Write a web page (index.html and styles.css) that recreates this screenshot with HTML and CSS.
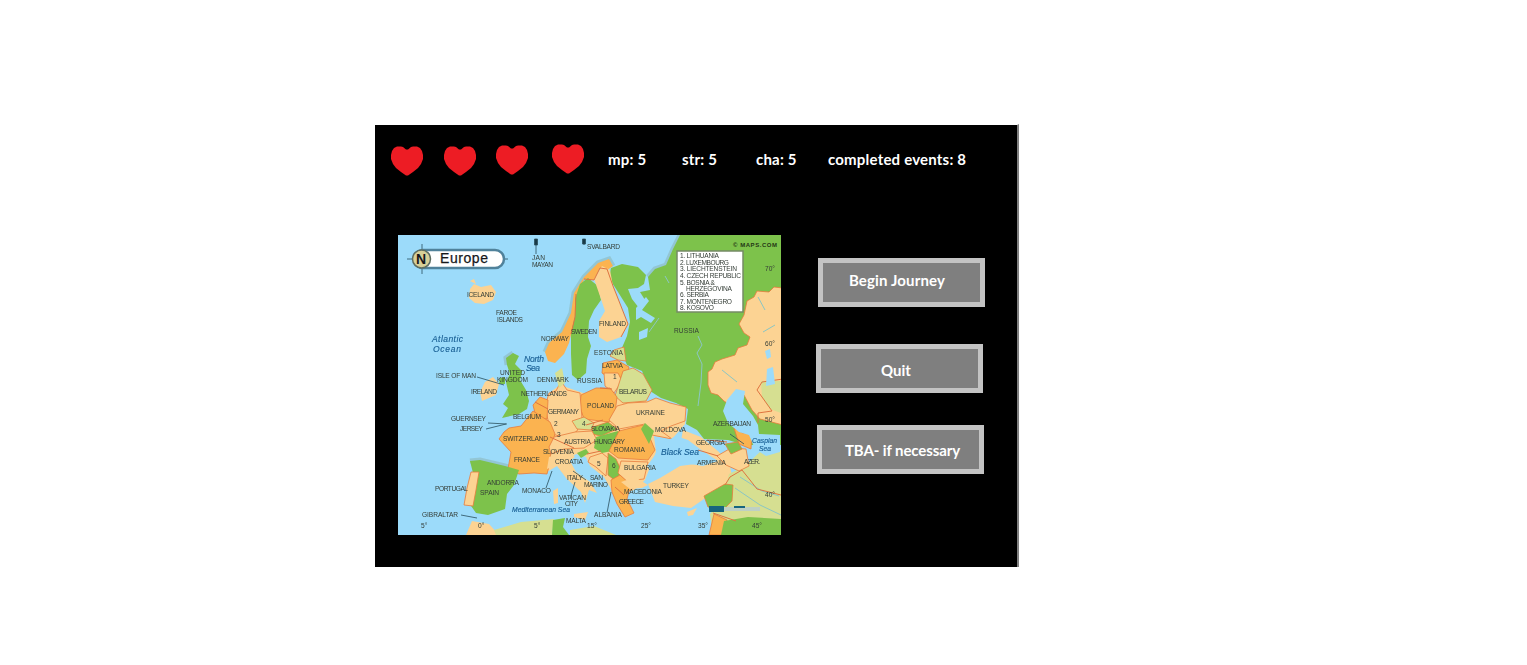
FILE: index.html
```html
<!DOCTYPE html>
<html lang="en">
<head>
<meta charset="utf-8">
<title>Journey</title>
<link rel="stylesheet" href="styles.css">
</head>
<body>
<svg class="defs" width="0" height="0" aria-hidden="true">
  <symbol id="heart" viewBox="0 0 32 30"><path d="M16 3.500H17L20 1L22 .5H26L29 2L31 5L32 9V13L30 18L27 22L22 26L17 29.500H15L10 26L5 22L2 18L0 13V9L1 5L3 2L6 .5H10L12 1L15 3.500Z"/></symbol>
</svg>
<main class="game">
  <header class="status">
    <div class="hearts">
      <svg class="heart"><use href="#heart"/></svg>
      <svg class="heart"><use href="#heart"/></svg>
      <svg class="heart heart-third"><use href="#heart"/></svg>
      <svg class="heart heart-last"><use href="#heart"/></svg>
    </div>
    <span class="stat mp">mp: 5</span>
    <span class="stat str">str: 5</span>
    <span class="stat cha">cha: 5</span>
    <span class="stat events">completed events: 8</span>
  </header>
  <section class="content">
    <svg class="map" viewBox="398 235 383 300" role="img" aria-label="Map of Europe">
      <g class="land">
        <rect class="sea" x="398" y="235" width="383" height="300"/>
        <!-- Shallow coastal water -->
        <path class="shelf" d="M545 352L549 343L562 332L571 313L574 293L584 277L598 263L609 259L613 266M680 235L673 249L666 265L655 269L648 277M507 365L506 358L513 353M470 461L480 460L505 466L519 470"/>
        <!-- Continental mainland -->
        <path class="beige" d="M549 393L560 385L583 393L640 400L686 407L685 424L672 439L654 436L656 452L645 480L634 490L624 494L632 512L624 515L611 489L604 477L590 466L586 457L576 454L569 459L576 472L590 482L584 490L567 479L557 466L547 472L535 470L540 420Z"/>
        <!-- Russia and Kola -->
        <path class="green" d="M680 235H781V445H745L728 440L704 439L697 430L686 424L688 409L676 403L661 398L650 391L642 371L627 365L621 350L627 336L630 322L628 308L618 292L609 278L611 268L622 264L638 267L646 275L644 284L638 288L628 289L632 299L639 308L645 300L640 292L650 290L648 277L655 269L666 265L673 249Z"/>
        <path class="sea" d="M636 308L646 297L649 301L642 310L655 318L651 323L641 317L636 320ZM639 332L648 328L647 337L639 340Z"/>
        <path class="river" d="M698 336L702 345L697 353L702 364L701 383L698 406M659 318L649 332M665 276L669 283"/>
        <!-- Kazakhstan -->
        <path class="beige edge" d="M783 288L774 287L769 292L757 291L754 297L747 301L744 315L739 324L744 333L750 337L747 345L738 348L735 355L722 359L715 362L712 369L708 372L708 385L711 393L718 395L724 401L730 405L738 396L744 395L752 410L760 419L783 425Z"/>
        <path class="pale" d="M761 381L781 381V413L770 409L762 397Z"/>
        <path class="border" d="M783 379L762 382L757 390L772 411L758 413V423"/>
        <path class="river" d="M758 297L765 310M722 370L737 382M775 325L763 332"/>
        <path class="sea" d="M767 369L773 367L775 384L766 386ZM765 351L770 349L771 357L767 359Z"/>
        <!-- Nordic countries -->
        <path class="orange" d="M545 352L549 343L562 332L571 313L574 293L584 277L598 263L609 259L613 266L606 271L600 268L594 280L584 279L578 294L574 322L569 343L564 354L555 363L548 361Z"/>
        <path class="green" d="M580 284L588 278L598 286L601 300L594 310L589 321L588 337L591 346L587 359L586 373L578 380L572 375L571 354L571 333L575 316L575 299Z"/>
        <path class="beige" d="M594 279L602 266L610 270L613 286L617 296L622 310L628 324L621 337L607 342L599 337L599 321L605 311L601 299Z"/>
        <path class="border" d="M584 279L594 280L600 268L607 269L613 286L617 296L628 324L621 337M576 294L575 317L571 334"/>
        <path class="beige" d="M470 289L474 284L481 287L491 285L496 292L493 300L484 304L475 303L469 298ZM470 281L474 279L476 284Z"/>
        <!-- British Isles -->
        <path class="green" d="M507 365L506 358L513 353L519 356L515 364L522 371L520 380L526 390L529 401L527 409L519 414L502 418L508 408L503 404L509 395L506 382L510 374ZM500 378L505 377V384L499 384Z"/>
        <path class="beige" d="M485 382L493 377L499 384L496 395L482 401L480 392Z"/>
        <!-- Baltics and eastern Europe -->
        <path class="pale edge" d="M614 350L624 347L626 361L618 360L610 356Z"/>
        <path class="orange edge" d="M603 363L617 360L629 367L627 377L609 378L602 373Z"/>
        <path class="beige edge" d="M604 373L618 373L622 381L614 393L605 386Z"/>
        <path class="pale edge" d="M623 371L633 368L643 374L652 390L646 401L623 403L615 396Z"/>
        <path class="orange edge" d="M581 395L596 388L610 388L617 397L615 413L609 422L584 419L580 407Z"/>
        <path class="beige edge" d="M617 406L628 403L647 402L656 398L670 403L686 407L685 421L671 426L661 431L672 439L652 435L645 424L619 429L609 420Z"/>
        <!-- Central and western Europe -->
        <path class="beige edge" d="M549 393L556 391L561 381L567 390L580 393L582 419L577 431L567 438L552 434L548 420L545 407Z"/>
        <path class="pale" d="M555 373L562 368L565 383L559 388Z"/>
        <path class="orange edge" d="M533 405L540 397L548 400L547 419L536 417Z"/>
        <path class="orange edge" d="M509 428L521 426L533 411L550 422L555 434L551 446L550 462L547 474L534 473L519 474L508 469L511 452L499 439L504 432Z"/>
        <path class="pale edge" d="M572 421L584 417L594 423L591 430L577 429Z"/>
        <path class="green edge" d="M593 427L608 422L617 429L601 436L592 434Z"/>
        <path class="beige edge" d="M554 437L575 432L592 431L597 440L584 448L564 449L551 454L549 447Z"/>
        <path class="green" d="M596 437L618 431L625 438L617 450L602 453L594 448Z"/>
        <path class="orange edge" d="M619 431L643 425L650 438L655 450L648 460L618 458L609 451Z"/>
        <path class="green" d="M645 423L654 431L649 444L641 429Z"/>
        <path class="beige" d="M549 457L567 451L575 457L568 462L576 477L590 482L597 493L589 490L585 503L581 492L567 479L557 465L547 469ZM574 514L588 512L585 520L574 517ZM553 491L558 488V503L554 504Z"/>
        <path class="green" d="M577 453L586 449L589 453L581 458Z"/>
        <path class="beige edge" d="M590 457L602 453L608 458L606 476L596 467L588 462Z"/>
        <path class="green edge" d="M608 453L616 459L621 470L617 482L608 475Z"/>
        <path class="beige edge" d="M621 461L648 462L644 479L626 481L618 473Z"/>
        <path class="orange edge" d="M611 480L620 475L629 483L639 484L629 491L627 499L634 513L625 517L617 504L612 492Z"/>
        <path class="beige" d="M621 482L635 477L648 485L642 488L630 489Z"/>
        <!-- Iberia -->
        <path class="green" d="M470 461L480 460L505 466L519 470L514 485L507 494L505 509L488 515L476 513L469 503L474 477Z"/>
        <path class="beige edge" d="M471 472L479 472L476 490L473 506L464 505L467 488Z"/>
        <!-- Turkey, Caucasus and Middle East -->
        <path class="beige" d="M648 484L660 478L680 466L703 463L730 466L734 486L724 494L704 499L691 508L673 506L655 502Z"/>
        <path class="pale" d="M729 474L745 466L760 452L781 450V535H713L710 514L723 498Z"/>
        <path class="beige" d="M683 430L701 437L719 452L730 466L724 474L700 460L680 446Z"/>
        <path class="green edge" d="M704 496L725 484L733 485L732 501L724 509L708 507Z"/>
        <path class="beige edge" d="M717 456L731 448L746 449L749 466L739 471L726 465Z"/>
        <path class="orange edge" d="M734 428L743 433L752 431L751 449L739 444Z"/>
        <path class="green edge" d="M725 444L738 442L742 449L731 454Z"/>
        <path class="orange edge" d="M714 514L727 520L724 535H709Z"/>
        <path class="green" d="M724 521L748 517L781 519V535H721Z"/>
        <path class="river" d="M735 488L760 505L781 515M740 477L762 491L779 496"/>
        <path class="border" d="M730 477L742 470L750 480L757 489L781 495M725 485L730 477M713 513L736 521"/>
        <!-- Black Sea and Caspian -->
        <path class="sea" d="M659 445L676 436L688 440L700 449L718 461L703 466L684 463L669 472L654 475L647 466L655 455Z"/>
        <path class="sea" d="M736 389L745 391L743 404L753 416L758 425L759 434L780 435V452L766 456L755 449L749 435L739 432L728 423L723 411L727 400Z"/>
        <!-- Africa -->
        <path class="beige" d="M466 535L472 521L489 524L499 535Z"/>
        <path class="pale" d="M494 530L521 522L554 519L552 535H496Z"/>
        <path class="green" d="M553 520L565 518L563 527L569 535H552Z"/>
        <path class="pale" d="M570 530L594 526L616 535H570Z"/>
        <path class="beige" d="M687 512L697 508L693 515L688 516Z"/>
        <path class="border" d="M612 389L600 388M603 420L586 425M601 451L587 454M535 402L548 409M550 437L574 448M624 495L615 487M707 440L727 442M698 450L718 456"/>
      </g>
      <g class="leaders">
        <path d="M536 239V254M584 239V245M477 377L504 385M488 423L507 424M486 429L506 424M461 515L477 518M546 488L552 471M570 499L575 482M607 513L611 492M586 480L573 471M730 434L744 444M407 259H434M422 244V274M500 259H508"/>
        <path d="M534.500 239H537.500V245H534.500ZM582.500 239H585.500V244H582.500Z"/>
      </g>
      <g class="title">
        <rect class="plate" x="414" y="250" width="90" height="18" rx="9"/>
        <circle class="compass" cx="421.500" cy="259" r="9"/>
        <text class="north" x="416" y="264" textLength="11">N</text>
        <text class="name" x="440" y="263" textLength="48">Europe</text>
      </g>
      <g class="labels">
        <text x="467" y="297" textLength="27">ICELAND</text>
        <text x="496" y="315" textLength="21">FAROE</text><text x="497" y="322" textLength="26">ISLANDS</text>
        <text x="532" y="260" textLength="13">JAN</text><text x="532" y="267" textLength="21">MAYAN</text>
        <text x="587" y="249" textLength="33">SVALBARD</text>
        <text x="541" y="341" textLength="28">NORWAY</text><text x="571" y="334" textLength="26">SWEDEN</text>
        <text x="599" y="326" textLength="27">FINLAND</text><text x="674" y="333" textLength="25">RUSSIA</text>
        <text x="594" y="355" textLength="29">ESTONIA</text><text x="602" y="368" textLength="21">LATVIA</text>
        <text x="613" y="379">1</text><text x="619" y="394" textLength="28">BELARUS</text>
        <text x="537" y="382" textLength="32">DENMARK</text><text x="577" y="383" textLength="25">RUSSIA</text>
        <text x="436" y="378" textLength="40">ISLE OF MAN</text><text x="500" y="375" textLength="25">UNITED</text><text x="497" y="382" textLength="31">KINGDOM</text>
        <text x="471" y="394" textLength="26">IRELAND</text><text x="521" y="396" textLength="46">NETHERLANDS</text>
        <text x="548" y="414" textLength="31">GERMANY</text><text x="587" y="408" textLength="27">POLAND</text><text x="636" y="415" textLength="29">UKRAINE</text>
        <text x="451" y="421" textLength="35">GUERNSEY</text><text x="460" y="431" textLength="23">JERSEY</text><text x="513" y="419" textLength="28">BELGIUM</text>
        <text x="554" y="426">2</text><text x="582" y="426">4</text><text x="597" y="466">5</text><text x="612" y="468">6</text><text x="557" y="437">3</text>
        <text x="591" y="431" textLength="29">SLOVAKIA</text><text x="655" y="432" textLength="31">MOLDOVA</text>
        <text x="503" y="441" textLength="45">SWITZERLAND</text><text x="564" y="444" textLength="27">AUSTRIA</text><text x="594" y="444" textLength="31">HUNGARY</text>
        <text x="543" y="454" textLength="31">SLOVENIA</text><text x="614" y="452" textLength="31">ROMANIA</text><text x="514" y="462" textLength="26">FRANCE</text>
        <text x="555" y="464" textLength="28">CROATIA</text><text x="624" y="470" textLength="32">BULGARIA</text>
        <text x="567" y="480" textLength="16">ITALY</text><text x="590" y="480" textLength="13">SAN</text><text x="584" y="487" textLength="24">MARINO</text>
        <text x="487" y="485" textLength="32">ANDORRA</text><text x="480" y="495" textLength="19">SPAIN</text><text x="435" y="491" textLength="33">PORTUGAL</text>
        <text x="522" y="493" textLength="29">MONACO</text><text x="559" y="500" textLength="27">VATICAN</text><text x="565" y="506" textLength="13">CITY</text>
        <text x="624" y="494" textLength="38">MACEDONIA</text><text x="619" y="504" textLength="25">GREECE</text><text x="594" y="517" textLength="28">ALBANIA</text>
        <text x="422" y="517" textLength="36">GIBRALTAR</text><text x="566" y="523" textLength="20">MALTA</text><text x="663" y="488" textLength="26">TURKEY</text>
        <text x="713" y="426" textLength="38">AZERBAIJAN</text><text x="696" y="445" textLength="29">GEORGIA</text><text x="697" y="465" textLength="29">ARMENIA</text><text x="744" y="464" textLength="16">AZER.</text>
        <text x="765" y="271">70°</text><text x="765" y="346">60°</text><text x="765" y="422">50°</text><text x="765" y="497">40°</text>
        <text x="421" y="528">5°</text><text x="478" y="528">0°</text><text x="534" y="528">5°</text><text x="587" y="528">15°</text><text x="641" y="528">25°</text><text x="698" y="528">35°</text><text x="752" y="528">45°</text>
      </g>
      <g class="waters">
        <text x="432" y="342" textLength="31">Atlantic</text><text x="433" y="352" textLength="28">Ocean</text>
        <text x="524" y="362" textLength="20">North</text><text x="526" y="371" textLength="14">Sea</text>
        <text x="661" y="455" textLength="38">Black Sea</text>
        <text class="small" x="752" y="443" textLength="25">Caspian</text><text class="small" x="759" y="451" textLength="12">Sea</text>
        <text class="small" x="512" y="512" textLength="58">Mediterranean Sea</text>
      </g>
      <g class="legend">
        <rect x="677" y="251" width="66" height="61"/>
        <text x="680" y="258" textLength="39">1. LITHUANIA</text><text x="680" y="264.500" textLength="49">2. LUXEMBOURG</text>
        <text x="680" y="271" textLength="57">3. LIECHTENSTEIN</text><text x="680" y="278" textLength="61">4. CZECH REPUBLIC</text>
        <text x="680" y="284.500" textLength="35">5. BOSNIA &amp;</text><text x="686" y="290.500" textLength="46">HERZEGOVINA</text>
        <text x="680" y="297" textLength="29">6. SERBIA</text><text x="680" y="303.500" textLength="52">7. MONTENEGRO</text><text x="680" y="310" textLength="34">8. KOSOVO</text>
      </g>
      <text class="credit" x="733" y="247" textLength="44">© MAPS.COM</text>
      <path class="scale-light" d="M709 507H760V511H709Z"/><path class="scale" d="M709 506H724V512H709ZM734 506H745V508H734Z"/>
    </svg>
    <nav class="actions">
      <button class="action begin">Begin Journey</button>
      <button class="action quit">Quit</button>
      <button class="action tba">TBA- if necessary</button>
    </nav>
  </section>
</main>
</body>
</html>
```
FILE: styles.css
```css
body { margin: 0; background: #fff; overflow: hidden; }
.defs { display: block; }
.game {
  box-sizing: border-box;
  width: 644px;
  height: 443px;
  margin: 124px 0 0 375px;
  border-top: 1px solid #fff;
  border-right: 2px solid #808080;
  background: #000;
  color: #fff;
  font: bold 15px/18px Lato, "Open Sans", sans-serif;
}
.status { display: flex; height: 110px; padding-left: 16px; box-sizing: border-box; }
.hearts { display: flex; gap: 21px; padding-top: 21px; width: 217px; flex: none; }
.heart { width: 32px; height: 30px; fill: #ed1c24; flex: none; }
.heart-third { margin: -1px 0 0 -1px; }
.heart-last { margin: -2px 0 0 3px; }
.stat { padding-top: 25px; white-space: nowrap; flex: none; letter-spacing: .2px; }
.mp { width: 74px; }
.str { width: 74px; }
.cha { width: 72px; }
.content { display: flex; align-items: flex-start; padding-left: 23px; }
.map { display: block; width: 383px; height: 300px; flex: none; }
.actions { display: flex; flex-direction: column; padding: 23px 0 0 35px; }
.action {
  box-sizing: border-box;
  width: 167px;
  height: 49px;
  padding: 0;
  border: 5px solid #c3c3c3;
  background: #7f7f7f;
  color: #fff;
  font: inherit;
  white-space: nowrap;
}
.begin { margin-left: 2px; padding: 0 9px 5px 0; letter-spacing: .15px; }
.quit { margin-top: 37px; padding: 2px 7px 0 0; }
.tba { margin: 32px 0 0 1px; padding: 0 0 0 4px; letter-spacing: -.1px; }

.land { filter: blur(.55px); }
.sea { fill: #9cdbfa; }
.shelf { fill: none; stroke: #8fbdc4; stroke-width: 5px; opacity: .7; }
.green { fill: #7dc24b; }
.orange { fill: #fbb350; }
.beige { fill: #fcd393; }
.pale { fill: #d6df91; }
.edge { stroke: #e77b3c; stroke-width: .8; }
.border { fill: none; stroke: #df7440; stroke-width: 1; }
.river { fill: none; stroke: #8bc6c4; stroke-width: 1; }
.leaders { stroke: #294f5d; stroke-width: .8; fill: #173947; }
.plate { fill: #fff; stroke: #50829b; stroke-width: 2.500px; }
.compass { fill: #d8cf97; stroke: #5e6e62; stroke-width: 1.500px; }
.title text { fill: #16181b; font-family: "Liberation Sans", Arial, sans-serif; }
.title .north { font-size: 14px; font-weight: bold; }
.title .name { font-size: 14px; font-weight: normal; stroke: #16181b; stroke-width: .25px; }
.labels text, .legend text { font: 6.600px "Liberation Sans", Arial, sans-serif; fill: #343d36; }
.labels, .legend, .waters { filter: blur(.3px); }
.waters text { font: italic 8.500px "Liberation Sans", Arial, sans-serif; fill: #195f94; stroke: #195f94; stroke-width: .15px; }
.waters .small { font-size: 6.800px; }
.legend rect { fill: #fff; stroke: #758b65; stroke-width: 1.500px; }
.credit { font: bold 6px "Liberation Sans", Arial, sans-serif; fill: #243515; }
.scale { fill: #17657e; }
.scale-light { fill: #bed0c4; }
```
